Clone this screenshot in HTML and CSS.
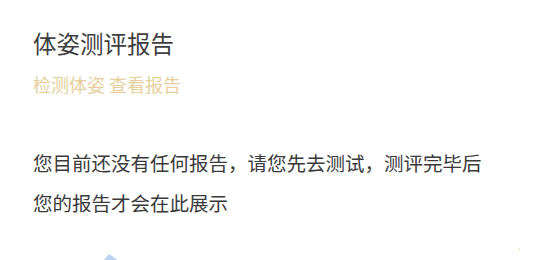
FILE: index.html
```html
<!DOCTYPE html>
<html lang="zh">
<head>
<meta charset="utf-8">
<link rel="stylesheet" href="styles.css">
</head>
<body>
<div class="page">
  <h1 class="title">体姿测评报告</h1>
  <div class="sub">检测体姿 查看报告</div>
  <p class="msg">您目前还没有任何报告，请您先去测试，测评完毕后<br>您的报告才会在此展示</p>
  <div class="art"><span class="tri"></span></div>
  <span class="dot"></span>
</div>
</body>
</html>
```
FILE: styles.css
```css
html, body {
  margin: 0;
  padding: 0;
  background: #fff;
}
body {
  width: 549px;
  height: 260px;
  overflow: hidden;
  font-family: "Noto Sans CJK SC", "Noto Sans", sans-serif;
}
.page {
  position: relative;
  padding: 28px 0 0 33px;
  height: 232px;
}
.title {
  margin: 0;
  font-size: 23.5px;
  font-weight: 400;
  line-height: 30px;
  color: #3f3f3f;
}
.sub {
  margin-top: 13.5px;
  font-size: 18px;
  line-height: 24px;
  color: #e6cf9c;
}
.msg {
  margin: 47.5px 0 0;
  font-size: 19.5px;
  line-height: 40px;
  color: #3a3a3a;
}
.art {
  position: absolute;
  left: 103px;
  top: 254px;
}
.tri {
  display: block;
  width: 0;
  height: 0;
  border-left: 6px solid transparent;
  border-right: 10px solid transparent;
  border-bottom: 7px solid #bcd3f2;
}
.dot {
  position: absolute;
  left: 519px;
  top: 249px;
  width: 1px;
  height: 1px;
  background: #c4c94a;
}
```
